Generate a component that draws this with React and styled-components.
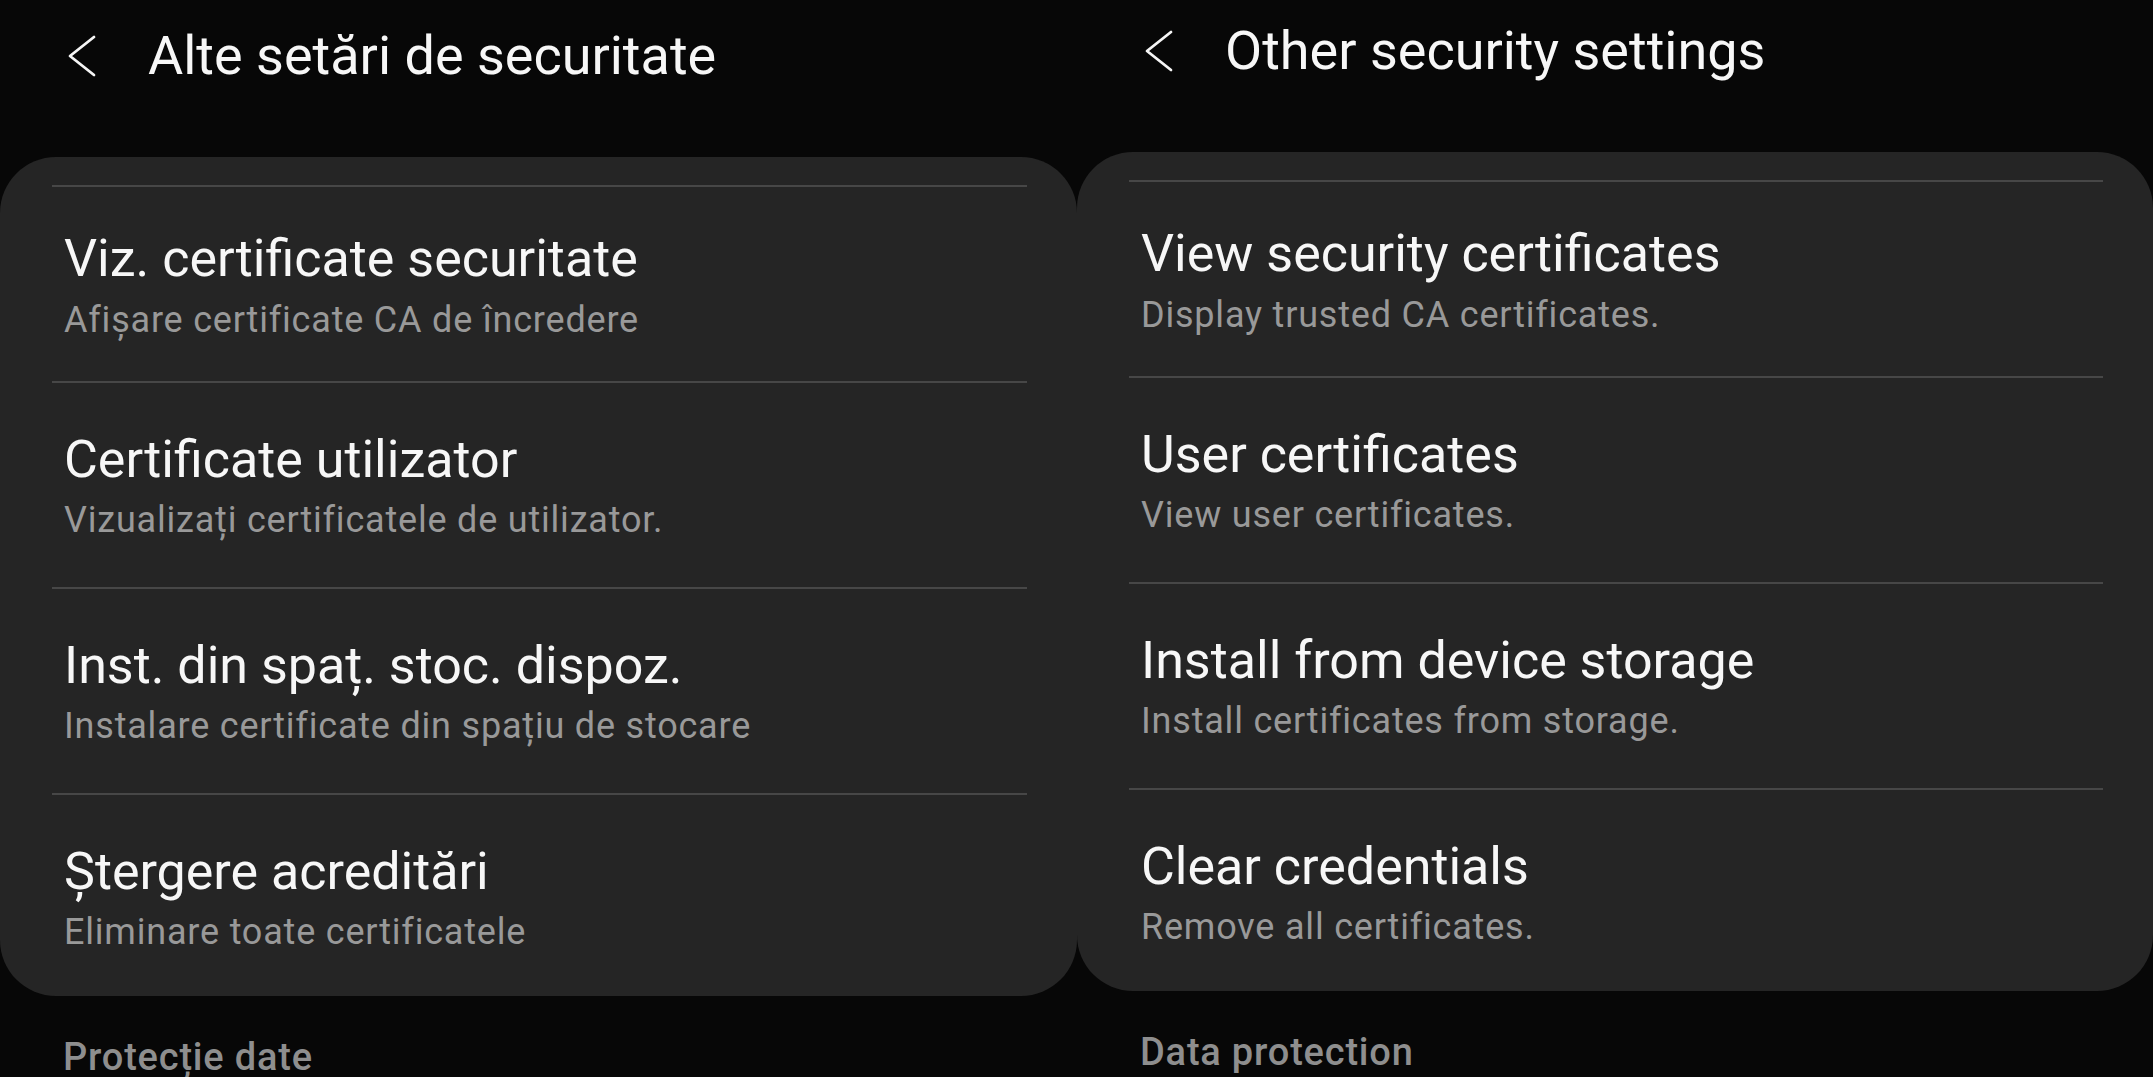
import React from 'react'
import styled, { createGlobalStyle } from 'styled-components'

const GlobalStyle = createGlobalStyle`
  html, body {
    margin: 0;
    padding: 0;
    background: #070707;
  }
  body {
    font-family: Roboto, "Noto Sans", "Liberation Sans", sans-serif;
    overflow: hidden;
  }
`

const panels = [
  {
    title: 'Alte setări de securitate',
    section: 'Protecție date',
    shift: 0,
    items: [
      { title: 'Viz. certificate securitate', sub: 'Afișare certificate CA de încredere' },
      { title: 'Certificate utilizator', sub: 'Vizualizați certificatele de utilizator.' },
      { title: 'Inst. din spaț. stoc. dispoz.', sub: 'Instalare certificate din spațiu de stocare' },
      { title: 'Ștergere acreditări', sub: 'Eliminare toate certificatele' },
    ],
  },
  {
    title: 'Other security settings',
    section: 'Data protection',
    shift: -5,
    items: [
      { title: 'View security certificates', sub: 'Display trusted CA certificates.' },
      { title: 'User certificates', sub: 'View user certificates.' },
      { title: 'Install from device storage', sub: 'Install certificates from storage.' },
      { title: 'Clear credentials', sub: 'Remove all certificates.' },
    ],
  },
]

const Back = () => (
  <svg width="30" height="44" viewBox="0 0 30 44" fill="none">
    <path d="M27 3 L3 22 L27 41" stroke="#f5f5f5" strokeWidth="2.8" strokeLinecap="round" strokeLinejoin="round" />
  </svg>
)

const SettingsPanel = ({ title, section, shift, items }) => (
  <StylePanel $shift={shift}>
    <div className='header'>
      <Back />
      <h1>{title}</h1>
    </div>
    <div className='card'>
      {items.map((it, i) => (
        <Item key={it.title} $first={i === 0}>
          <p className='title'>{it.title}</p>
          <p className='sub'>{it.sub}</p>
        </Item>
      ))}
    </div>
    <p className='section'>{section}</p>
  </StylePanel>
)

const App = () => (
  <Screen>
    <GlobalStyle />
    {panels.map(p => (
      <SettingsPanel key={p.title} {...p} />
    ))}
  </Screen>
)

const Screen = styled.div`
  display: grid;
  grid-template-columns: 1077px 1076px;
  align-items: start;
  width: 2153px;
  height: 1077px;
  overflow: hidden;
  background: #070707;
`

const StylePanel = styled.div`
  display: block;
  margin-top: ${p => p.$shift}px;

  .header {
    display: flex;
    align-items: center;
    gap: 51px;
    padding: 26px 0 0 67px;
    height: 60px;

    h1 {
      margin: 0;
      font-weight: 400;
      font-size: 54px;
      line-height: 60px;
      color: #f7f7f7;
    }
  }

  .card {
    margin-top: 71px;
    background: #252525;
    border-radius: 56px;
    padding: 28px 50px 0 52px;
  }

  .section {
    margin: 38px 0 0 63px;
    font-weight: 500;
    font-size: 38px;
    letter-spacing: 0.8px;
    line-height: 46px;
    color: #8e8e8e;
  }
`

const Item = styled.div`
  border-top: 2px solid #474747;
  padding: ${p => (p.$first ? '42px 0 39px 12px' : '47px 0 45px 12px')};

  &:last-child {
    padding-bottom: 42px;
  }

  p {
    margin: 0;
    white-space: nowrap;
  }

  .title {
    font-size: 52px;
    line-height: 60px;
    font-weight: 400;
    color: #f7f7f7;
  }

  .sub {
    margin-top: ${p => (p.$first ? '9px' : '8px')};
    font-size: 36px;
    letter-spacing: 0.8px;
    line-height: 44px;
    color: #999999;
  }
`

export default App
